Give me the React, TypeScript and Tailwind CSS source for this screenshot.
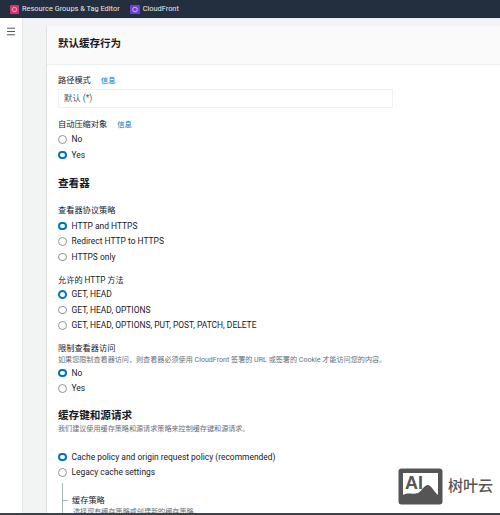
import React from "react";

const FONT = "font-['Roboto','Noto_Sans_CJK_SC',sans-serif]";

function Radio({ label, checked }: { label: string; checked?: boolean }) {
  return (
    <div className="flex h-[15.5px] items-center gap-[5px] text-[8.45px] leading-none text-[#16191f]">
      {checked ? (
        <span className="h-[8.5px] w-[8.5px] shrink-0 rounded-full border-[2.6px] border-[#0073bb] bg-white" />
      ) : (
        <span className="h-[8.5px] w-[8.5px] shrink-0 rounded-full border border-[#8d9494] bg-white" />
      )}
      <span>{label}</span>
    </div>
  );
}

function Label({ children, info }: { children: React.ReactNode; info?: boolean }) {
  return (
    <div className="flex h-[13px] items-center gap-[10px] text-[8.2px] leading-none text-[#16191f]">
      <span>{children}</span>
      {info && <span className="text-[7.4px] text-[#0073bb]">信息</span>}
    </div>
  );
}

function Logo() {
  return (
    <svg width="45" height="37" viewBox="0 0 45 37">
      <rect x="0.5" y="0.5" width="44" height="36" rx="3" fill="#555" />
      <path d="M5 5H40V27C36 24 34 18 30 17C26 17 24 23 20 25C15 27 10 24 5 27Z" fill="#fff" />
      <text x="7" y="21" fontSize="18" fontWeight="700" fill="#555" fontFamily="Liberation Sans">AI</text>
    </svg>
  );
}

export default function App() {
  return (
    <div className={`relative flex h-[515px] w-[500px] flex-col overflow-hidden bg-white ${FONT}`}>
      <header className="flex h-[18px] shrink-0 items-center gap-[10px] bg-[#232f3e] pl-[10px] text-[7.4px] leading-none text-[#e8eaed]">
        <div className="flex items-center gap-[3px]">
          <svg width="9" height="9" viewBox="0 0 9 9">
            <rect width="9" height="9" rx="1" fill="#d6336c" />
            <circle cx="4.5" cy="4.5" r="2.2" fill="none" stroke="#f7c3d6" strokeWidth="0.8" />
          </svg>
          <span>Resource Groups &amp; Tag Editor</span>
        </div>
        <div className="flex items-center gap-[3px]">
          <svg width="10" height="9" viewBox="0 0 10 9">
            <rect width="10" height="9" rx="1" fill="#6b40d8" />
            <circle cx="5" cy="4.5" r="2.3" fill="none" stroke="#d5c8f7" strokeWidth="0.9" />
          </svg>
          <span>CloudFront</span>
        </div>
      </header>

      <div className="flex min-h-0 flex-1 border-b-2 border-[#39424e]">
        <aside className="w-[23px] shrink-0 border-r border-[#e4e6e6] bg-white pl-[6px] pt-[9px]">
          <svg width="10" height="9" viewBox="0 0 10 9" className="block">
            <path d="M1 1.2H9M1 4.5H9M1 7.8H9" stroke="#545b64" strokeWidth="1" />
          </svg>
        </aside>
        <div className="flex min-w-0 flex-1 flex-col bg-[#f2f3f3]">
          <div className="h-[1px] bg-[#e3edf5]" />
          <div className="flex min-h-0 flex-1 pl-[23px] pt-[7px]">
            <main className="min-w-0 flex-1 overflow-hidden border-l border-[#dfe2e2] bg-white">
              <div className="flex h-[39px] items-center border-b border-[#eaeded] bg-[#fafafa] pb-[2px] pl-[11px] text-[10.5px] font-semibold leading-none text-[#16191f]">
                默认缓存行为
              </div>

              <div className="px-[11px] pt-[9px]">
                <Label info>路径模式</Label>
                <div className="mt-[2px] flex h-[19px] w-[335px] items-center border border-[#f0f1f1] pl-[5px] text-[8.4px] leading-none text-[#545b64]">
                  默认 (*)
                </div>

                <div className="mt-[10px]">
                  <Label info>自动压缩对象</Label>
                  <div className="pt-[0.5px]">
                    <Radio label="No" />
                    <Radio label="Yes" checked />
                  </div>
                </div>

                <h2 className="mt-[14.5px] text-[10.6px] font-bold leading-[14px] text-[#16191f]">查看器</h2>

                <div className="mt-[13px]">
                  <Label>查看器协议策略</Label>
                  <div className="mt-[1px]">
                    <Radio label="HTTP and HTTPS" checked />
                    <Radio label="Redirect HTTP to HTTPS" />
                    <Radio label="HTTPS only" />
                  </div>
                </div>

                <div className="mt-[9px]">
                  <Label>允许的 HTTP 方法</Label>
                  <div>
                    <Radio label="GET, HEAD" checked />
                    <Radio label="GET, HEAD, OPTIONS" />
                    <Radio label="GET, HEAD, OPTIONS, PUT, POST, PATCH, DELETE" />
                  </div>
                </div>

                <div className="mt-[9px]">
                  <Label>限制查看器访问</Label>
                  <p className="mt-[-1px] h-[11px] text-[7.1px] leading-[11px] text-[#687078]">
                    如果您限制查看器访问，则查看器必须使用 CloudFront 签署的 URL 或签署的 Cookie 才能访问您的内容。
                  </p>
                  <div>
                    <Radio label="No" checked />
                    <Radio label="Yes" />
                  </div>
                </div>

                <h2 className="mt-[13px] text-[10.6px] font-bold leading-[14px] text-[#16191f]">缓存键和源请求</h2>
                <p className="h-[11px] text-[7.1px] leading-[11px] text-[#687078]">
                  我们建议使用缓存策略和源请求策略来控制缓存键和源请求。
                </p>

                <div className="mt-[15px]">
                  <Radio label="Cache policy and origin request policy (recommended)" checked />
                  <Radio label="Legacy cache settings" />
                </div>

                <div className="ml-[4px] mt-[3px] border-l border-[#aab7b8] pt-[11px]">
                  <div className="flex h-[13px] items-center gap-[4px] text-[8.2px] leading-none text-[#16191f]">
                    <span className="h-px w-[5px] bg-[#aab7b8]" />
                    <span>缓存策略</span>
                  </div>
                  <p className="ml-[10px] mt-[-1px] text-[7.1px] leading-[11px] text-[#687078]">选择现有缓存策略或创建新的缓存策略。</p>
                </div>
              </div>
            </main>
          </div>
        </div>
      </div>

      <div className="absolute left-[398px] top-[468px] flex items-center gap-[5px]">
        <Logo />
        <span className="text-[15px] font-medium leading-none text-[#555]">树叶云</span>
      </div>
    </div>
  );
}
